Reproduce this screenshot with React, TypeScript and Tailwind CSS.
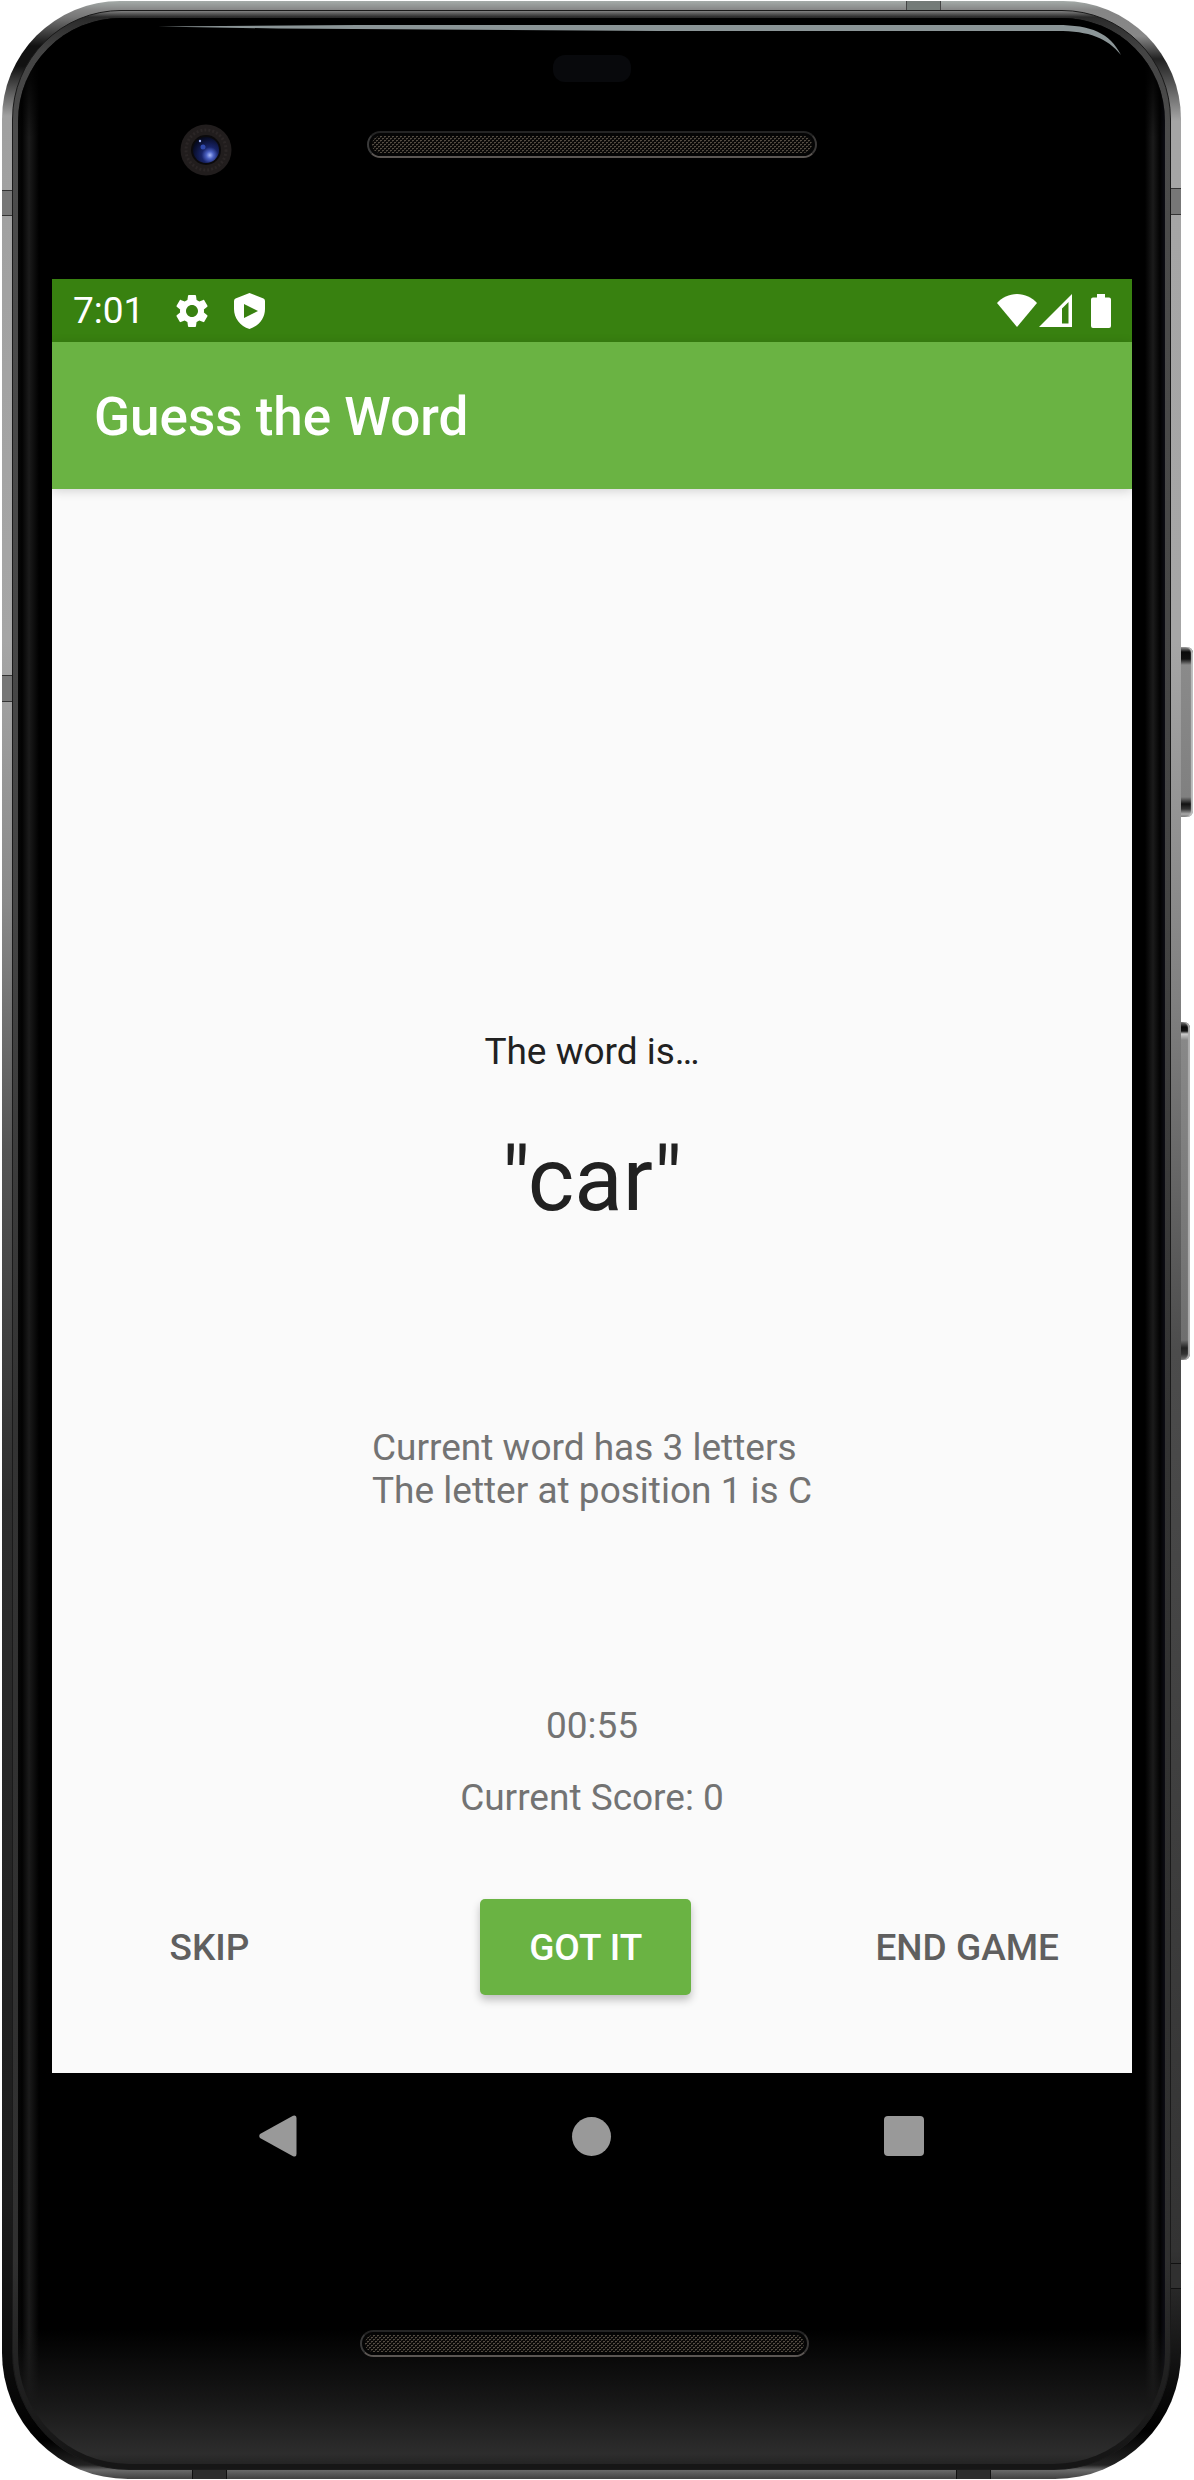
import React from "react";

function Speaker({ id }: { id: string }) {
  return (
    <div className="h-[27px] w-full overflow-hidden rounded-full border-2 border-t-[#242424] border-r-[#3a3837] border-b-[#5b5653] border-l-[#3a3a3a] bg-[#050505] p-[3px]">
      <svg className="h-full w-full rounded-full" aria-hidden="true">
        <defs>
          <pattern id={id} width="4" height="4" patternUnits="userSpaceOnUse">
            <rect width="4" height="4" fill="#0a0908" />
            <rect x="0" y="0" width="2" height="1" fill="#544d43" />
            <rect x="2" y="2" width="2" height="1" fill="#544d43" />
            <rect x="0" y="1" width="1" height="1" fill="#2f2a26" />
            <rect x="2" y="3" width="1" height="1" fill="#2f2a26" />
          </pattern>
        </defs>
        <rect width="100%" height="100%" fill={`url(#${id})`} />
      </svg>
    </div>
  );
}

function Camera() {
  return (
    <svg className="ml-[128px] size-[52px]" viewBox="0 0 52 52" aria-hidden="true">
      <defs>
        <radialGradient id="lens" cx="0.65" cy="0.7" r="0.7">
          <stop offset="0" stopColor="#a9baf8" />
          <stop offset="0.2" stopColor="#4c62c4" />
          <stop offset="0.45" stopColor="#182468" />
          <stop offset="1" stopColor="#060a20" />
        </radialGradient>
      </defs>
      <circle cx="26" cy="26" r="25.5" fill="#211d1d" />
      <circle cx="26" cy="26" r="20" fill="none" stroke="#2b2626" strokeWidth="3" strokeDasharray="2 2" />
      <circle cx="26" cy="26" r="15" fill="#0b0a0c" />
      <circle cx="26" cy="26" r="13" fill="url(#lens)" />
      <circle cx="23" cy="23" r="2.5" fill="#3049ac" />
      <circle cx="20" cy="17" r="1.2" fill="#9db0f4" />
    </svg>
  );
}

function Glare() {
  return (
    <div className="absolute top-[7px] right-[44px] left-[140px] flex items-start" aria-hidden="true">
      <svg className="h-[6px] min-w-0 flex-1" viewBox="0 0 900 6" preserveAspectRatio="none">
        <path d="M0 1.5L200 0H900V6H500L120 3.5Z" fill="#8b9597" />
      </svg>
      <svg className="h-[30px] w-[64px]" viewBox="0 0 64 30">
        <path d="M0 0C34 0 53 8 64 30C50 13 33 6 0 6Z" fill="#8b9597" />
      </svg>
    </div>
  );
}

function StatusBar() {
  return (
    <div className="flex h-[63px] items-center bg-[#388110] px-[21px] text-white">
      <span className="text-[37px] leading-[43px]">7:01</span>
      <svg className="ml-[28px] size-[40px]" viewBox="0 0 24 24" fill="currentColor" role="img" aria-label="Settings">
        <path d="M19.14 12.94c.04-.3.06-.61.06-.94 0-.32-.02-.64-.07-.94l2.03-1.58c.18-.14.23-.41.12-.61l-1.92-3.32c-.12-.22-.37-.29-.59-.22l-2.39.96c-.5-.38-1.03-.7-1.62-.94l-.36-2.54c-.04-.24-.24-.41-.48-.41h-3.84c-.24 0-.43.17-.47.41l-.36 2.54c-.59.24-1.13.57-1.62.94l-2.39-.96c-.22-.08-.47 0-.59.22L2.74 8.87c-.12.21-.08.47.12.61l2.03 1.58c-.05.3-.09.63-.09.94s.02.64.07.94l-2.03 1.58c-.18.14-.23.41-.12.61l1.92 3.32c.12.22.37.29.59.22l2.39-.96c.5.38 1.03.7 1.62.94l.36 2.54c.05.24.24.41.48.41h3.84c.24 0 .44-.17.47-.41l.36-2.54c.59-.24 1.13-.56 1.62-.94l2.39.96c.22.08.47 0 .59-.22l1.92-3.32c.12-.22.07-.47-.12-.61l-2.01-1.58zM12 15.6c-1.98 0-3.6-1.62-3.6-3.6s1.62-3.6 3.6-3.6 3.6 1.62 3.6 3.6-1.62 3.6-3.6 3.6z" />
      </svg>
      <svg className="ml-[22px] h-[36px] w-[31px]" viewBox="0 0 31 36" fill="currentColor" fillRule="evenodd" role="img" aria-label="Play Protect">
        <path d="M15.500 0L29.500 5.500Q31 6.200 31 8V16C31 25 25 33 15.500 36C6 33 0 25 0 16V8Q0 6.200 1.500 5.500ZM10 11V25L24 18Z" />
      </svg>
      <div className="ml-auto flex items-center">
        <svg className="h-[33px] w-[40px]" viewBox="0 0 40 33" fill="currentColor" role="img" aria-label="Wi-Fi">
          <path d="M20 33L0 9C5 3.500 12 0 20 0S35 3.500 40 9Z" />
        </svg>
        <svg className="ml-[2px] size-[33px]" viewBox="0 0 33 33" fill="currentColor" fillRule="evenodd" role="img" aria-label="Mobile signal">
          <path d="M33 0V33H0ZM29.500 8L23 14.500V29.500H29.500Z" />
        </svg>
        <svg className="ml-[19px] h-[34px] w-[20px]" viewBox="0 0 20 34" fill="currentColor" role="img" aria-label="Battery">
          <path d="M6 0H14V3.500H18Q20 3.500 20 5.500V32Q20 34 18 34H2Q0 34 0 32V5.500Q0 3.500 2 3.500H6Z" />
        </svg>
      </div>
    </div>
  );
}

function NavBar() {
  const button = "flex h-[126px] w-[84px] items-center justify-center text-[#999999]";
  return (
    <nav className="flex justify-between bg-black pr-[186px] pl-[184px]" aria-label="System navigation">
      <button type="button" className={button} aria-label="Back">
        <svg className="h-[42px] w-[38px]" viewBox="0 0 38 42" fill="currentColor">
          <path d="M1 19L34 .8Q37.500-.5 37.500 3V39Q37.500 42.500 34 41.200L1 23Q-.5 21 1 19Z" />
        </svg>
      </button>
      <button type="button" className={button} aria-label="Home">
        <span className="size-[39px] rounded-full bg-current" />
      </button>
      <button type="button" className={button} aria-label="Recent apps">
        <span className="size-[40px] rounded-[4px] bg-current" />
      </button>
    </nav>
  );
}

function GameScreen() {
  const flat = "h-[96px] min-w-[231px] px-[31px] text-[#5f5f5f]";
  return (
    <div className="bg-[#fafafa]">
      <StatusBar />
      <header className="relative flex h-[147px] items-center bg-[#6ab343] px-[42px] pt-[2px] shadow-[0_2px_10px_rgba(0,0,0,0.16)]">
        <h1 className="text-[53px] leading-[62px] font-medium text-white">Guess the Word</h1>
      </header>
      <main className="flex flex-col items-center pt-[541px] pb-[78px] text-[37px] leading-[43px] text-[#737373]">
        <p className="text-[#212121]">The word is…</p>
        <p className="mt-[55px] text-[89px] leading-[104px] text-[#212121]">"car"</p>
        <p className="mt-[194px]">
          Current word has 3 letters
          <br />
          The letter at position 1 is C
        </p>
        <p className="mt-[192px]">00:55</p>
        <p className="mt-[29px]">Current Score: 0</p>
        <div className="mt-[80px] flex w-full justify-between px-[42px] font-medium">
          <button type="button" className={flat}>SKIP</button>
          <button
            type="button"
            className="mr-[10px] ml-[12px] h-[96px] min-w-[211px] rounded-[5px] bg-[#6ab343] px-[31px] text-white shadow-[0_5px_8px_rgba(0,0,0,0.24)]"
          >
            GOT IT
          </button>
          <button type="button" className={flat}>END GAME</button>
        </div>
      </main>
      <NavBar />
    </div>
  );
}

export default function App() {
  return (
    <div className="min-h-screen overflow-hidden bg-white py-px pr-[13px] pl-[2px] font-[Roboto,sans-serif]">
      <div className="relative">
        <div className="absolute top-[646px] -right-[12px] h-[170px] w-[16px] rounded-r-[6px] bg-[linear-gradient(to_bottom,#999_0,#0a0a0a_5px,#111_12px,#8a8a8a_18px,#808080_150px,#111_157px,#333_162px,#aaa_167px,#777)] shadow-[inset_-2px_0_1px_#c0c0c0]" />
        <div className="absolute top-[1021px] -right-[9px] h-[338px] w-[13px] rounded-r-[6px] bg-[linear-gradient(to_bottom,#777_0,#080808_5px,#111_9px,#ccc_12px,#888_18px,#6f6f6f_318px,#222_326px,#333_332px,#777)] shadow-[inset_-2px_0_1px_#b0b0b0]" />
        <div className="relative overflow-hidden rounded-t-[118px] rounded-b-[126px] bg-[linear-gradient(to_bottom,#a4aba8_0,#858585_9px,#777_16px,#111_45px,#111_65px,#a0a0a0_115px,#a6a6a6_640px,#8a8a8a_900px,#555_1150px,#2e2e2e_1500px,#1c1c1c_2200px,#080808_2390px,#000_2440px,#222_2464px,#6a6a6a_2469px,#444_2477px),linear-gradient(to_bottom,#a4aba8_0,#858585_9px,#888_35px,#222_58px,#444_75px,#a5a5a5_120px,#a6a6a6_640px,#808080_1000px,#4c4c4c_1350px,#3c3c3c_1900px,#333_2250px,#0a0a0a_2390px,#000_2430px,#222_2464px,#6a6a6a_2469px,#444_2477px)] bg-[length:51%_100%] bg-[position:left,right] bg-no-repeat px-[10px] pt-[9px] pb-[9px]">
          <div className="absolute top-[189px] left-0 h-[26px] w-[16px] border-y border-[#333] bg-[#777]" />
          <div className="absolute top-[674px] left-0 h-[27px] w-[16px] border-y border-[#333] bg-[#777]" />
          <div className="absolute top-[187px] right-0 h-[27px] w-[16px] border-y border-[#333] bg-[#777]" />
          <div className="absolute right-0 bottom-[190px] h-[26px] w-[16px] border-y border-[#111] bg-[#303030]" />
          <div className="absolute top-0 right-[240px] h-[17px] w-[35px] border-x border-[#444] bg-[#747b78]" />
          <div className="absolute bottom-0 left-[190px] h-[16px] w-[35px] border-x border-[#111] bg-[#2e2e2e]" />
          <div className="absolute right-[190px] bottom-0 h-[16px] w-[35px] border-x border-[#111] bg-[#2e2e2e]" />
          <div className="relative rounded-t-[109px] rounded-b-[117px] border border-[#1a1a1a] bg-[linear-gradient(to_bottom,#808080_0,#2a2a2a_6px,#444_40px,#4c4c4c_120px,#444_900px,#333_1400px,#303030_2250px,#161616_2440px)] px-[5px] pt-[7px] pb-[5px]">
            <div className="relative overflow-hidden rounded-t-[103px] rounded-b-[111px] bg-[linear-gradient(to_top,#242424_0,#2d2d2d_10px,#181818_60px,transparent_135px),linear-gradient(to_right,#060606_0,#020202_4px,#1b1b1b_11px,#000_21px,#000_calc(100%-20px),#1b1b1b_calc(100%-12px),#020202_calc(100%-5px),#0c0c14_100%)]">
              <div className="absolute inset-x-0 top-0 h-[120px] bg-linear-to-b from-black via-black/80 to-transparent" />
              <Glare />
              <div className="relative pr-[33px] pl-[34px]">
                <div className="pt-[37px] pb-[103px]">
                  <div className="mx-auto h-[27px] w-[78px] rounded-[12px] bg-[#08090c]" />
                  <div className="mt-[42px] grid grid-cols-[1fr_450px_1fr] items-start">
                    <Camera />
                    <div className="pt-[7px]">
                      <Speaker id="earpiece-mesh" />
                    </div>
                  </div>
                </div>
                <GameScreen />
                <div className="flex justify-center pt-[131px] pr-[15px] pb-[107px]">
                  <div className="w-[449px]">
                    <Speaker id="bottom-mesh" />
                  </div>
                </div>
              </div>
            </div>
          </div>
        </div>
      </div>
    </div>
  );
}
